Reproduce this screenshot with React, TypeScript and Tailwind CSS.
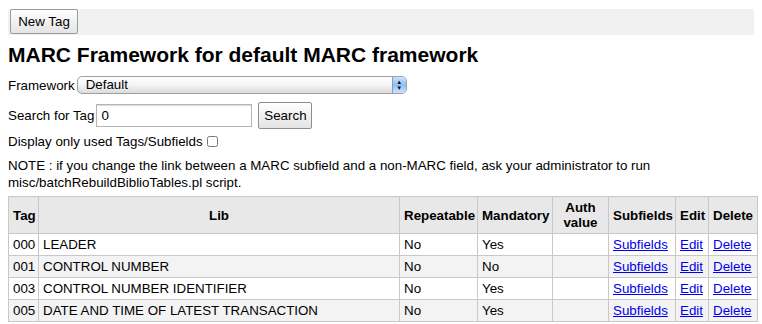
import { useState } from 'react';

interface ITag {
  tag: string;
  lib: string;
  repeatable: string;
  mandatory: string;
}

const tags: ITag[] = [
  { tag: '000', lib: 'LEADER', repeatable: 'No', mandatory: 'Yes' },
  { tag: '001', lib: 'CONTROL NUMBER', repeatable: 'No', mandatory: 'No' },
  { tag: '003', lib: 'CONTROL NUMBER IDENTIFIER', repeatable: 'No', mandatory: 'Yes' },
  { tag: '005', lib: 'DATE AND TIME OF LATEST TRANSACTION', repeatable: 'No', mandatory: 'Yes' },
];

const th = 'border border-[#c8c8c8] px-1 font-bold text-center align-middle';
const td = 'border border-[#c8c8c8] px-1 align-middle';
const link = 'text-[#0000ee] underline';

const App = () => {
  const [search, setSearch] = useState('0');
  const [onlyUsed, setOnlyUsed] = useState(false);

  return (
    <div className="min-h-screen bg-white px-2 pt-[9px] text-[13.33px] leading-[17px] text-black font-['Liberation_Sans',Arial,sans-serif]">
      {/* Toolbar */}
      <div className="flex h-[26px] items-start bg-[#f1f1f1] pl-[2px]">
        <button className="h-[25px] w-[68px] rounded-[2px] border border-[#9a9a9a] bg-gradient-to-b from-white to-[#e4e4e4] text-[13.33px]">
          New Tag
        </button>
      </div>

      <h1 className="mt-[8px] text-[21px] font-bold leading-[24px]">
        MARC Framework for default MARC framework
      </h1>

      {/* Framework select */}
      <div className="mt-[9px] flex h-[18px] items-center gap-[2px]">
        <span>Framework</span>
        <div className="flex h-[18px] w-[330px] items-stretch overflow-hidden rounded-[5px] border border-[#a0a0a0] bg-gradient-to-b from-white via-[#f4f4f4] to-[#dcdcdc]">
          <span className="flex-1 pl-[8px] leading-[16px]">Default</span>
          <span className="flex w-[14px] flex-col items-center justify-center border-l border-[#7d9fd0] bg-gradient-to-b from-[#cfe3fb] via-[#8fbdf3] to-[#cfe3fb] text-[6px] leading-[6px] text-[#111]">
            <span>▲</span>
            <span>▼</span>
          </span>
        </div>
      </div>

      {/* Search */}
      <div className="mt-[8px] flex items-center">
        <span>Search for Tag</span>
        <input
          value={search}
          onChange={(e) => setSearch(e.target.value)}
          className="ml-[2px] h-[23px] w-[156px] border border-[#b5b5b5] px-[4px] text-[13.33px] outline-none shadow-[inset_0_1px_1px_rgba(0,0,0,0.15)]"
        />
        <button className="ml-[6px] h-[27px] w-[54px] rounded-[2px] border border-[#8e8e8e] bg-gradient-to-b from-white to-[#e4e4e4] text-[13.33px]">
          Search
        </button>
      </div>

      <div className="mt-[4px] flex items-center">
        <span>Display only used Tags/Subfields</span>
        <input
          type="checkbox"
          checked={onlyUsed}
          onChange={(e) => setOnlyUsed(e.target.checked)}
          className="ml-[4px] h-[11px] w-[11px]"
        />
      </div>

      <p className="mt-[7px]">
        NOTE : if you change the link between a MARC subfield and a non-MARC field, ask your administrator to run
        <br />
        misc/batchRebuildBiblioTables.pl script.
      </p>

      {/* Tags table */}
      <table className="mt-[5px] w-[749px] table-fixed border-collapse">
        <colgroup>
          <col className="w-[30px]" />
          <col className="w-[361px]" />
          <col className="w-[78px]" />
          <col className="w-[75px]" />
          <col className="w-[56px]" />
          <col className="w-[67px]" />
          <col className="w-[33px]" />
          <col className="w-[49px]" />
        </colgroup>
        <thead>
          <tr className="h-[37px] bg-[#e8e8e8]">
            <th className={th}>Tag</th>
            <th className={th}>Lib</th>
            <th className={th}>Repeatable</th>
            <th className={th}>Mandatory</th>
            <th className={`${th} leading-[15px]`}>
              Auth
              <br />
              value
            </th>
            <th className={th}>Subfields</th>
            <th className={th}>Edit</th>
            <th className={th}>Delete</th>
          </tr>
        </thead>
        <tbody>
          {tags.map((t, i) => (
            <tr key={t.tag} className={i % 2 === 1 ? 'h-[22px] bg-[#f3f3f3]' : 'h-[22px] bg-white'}>
              <td className={td}>{t.tag}</td>
              <td className={td}>{t.lib}</td>
              <td className={td}>{t.repeatable}</td>
              <td className={td}>{t.mandatory}</td>
              <td className={td}></td>
              <td className={td}>
                <a href="#" className={link}>Subfields</a>
              </td>
              <td className={td}>
                <a href="#" className={link}>Edit</a>
              </td>
              <td className={td}>
                <a href="#" className={link}>Delete</a>
              </td>
            </tr>
          ))}
        </tbody>
      </table>
    </div>
  );
};

export default App;
